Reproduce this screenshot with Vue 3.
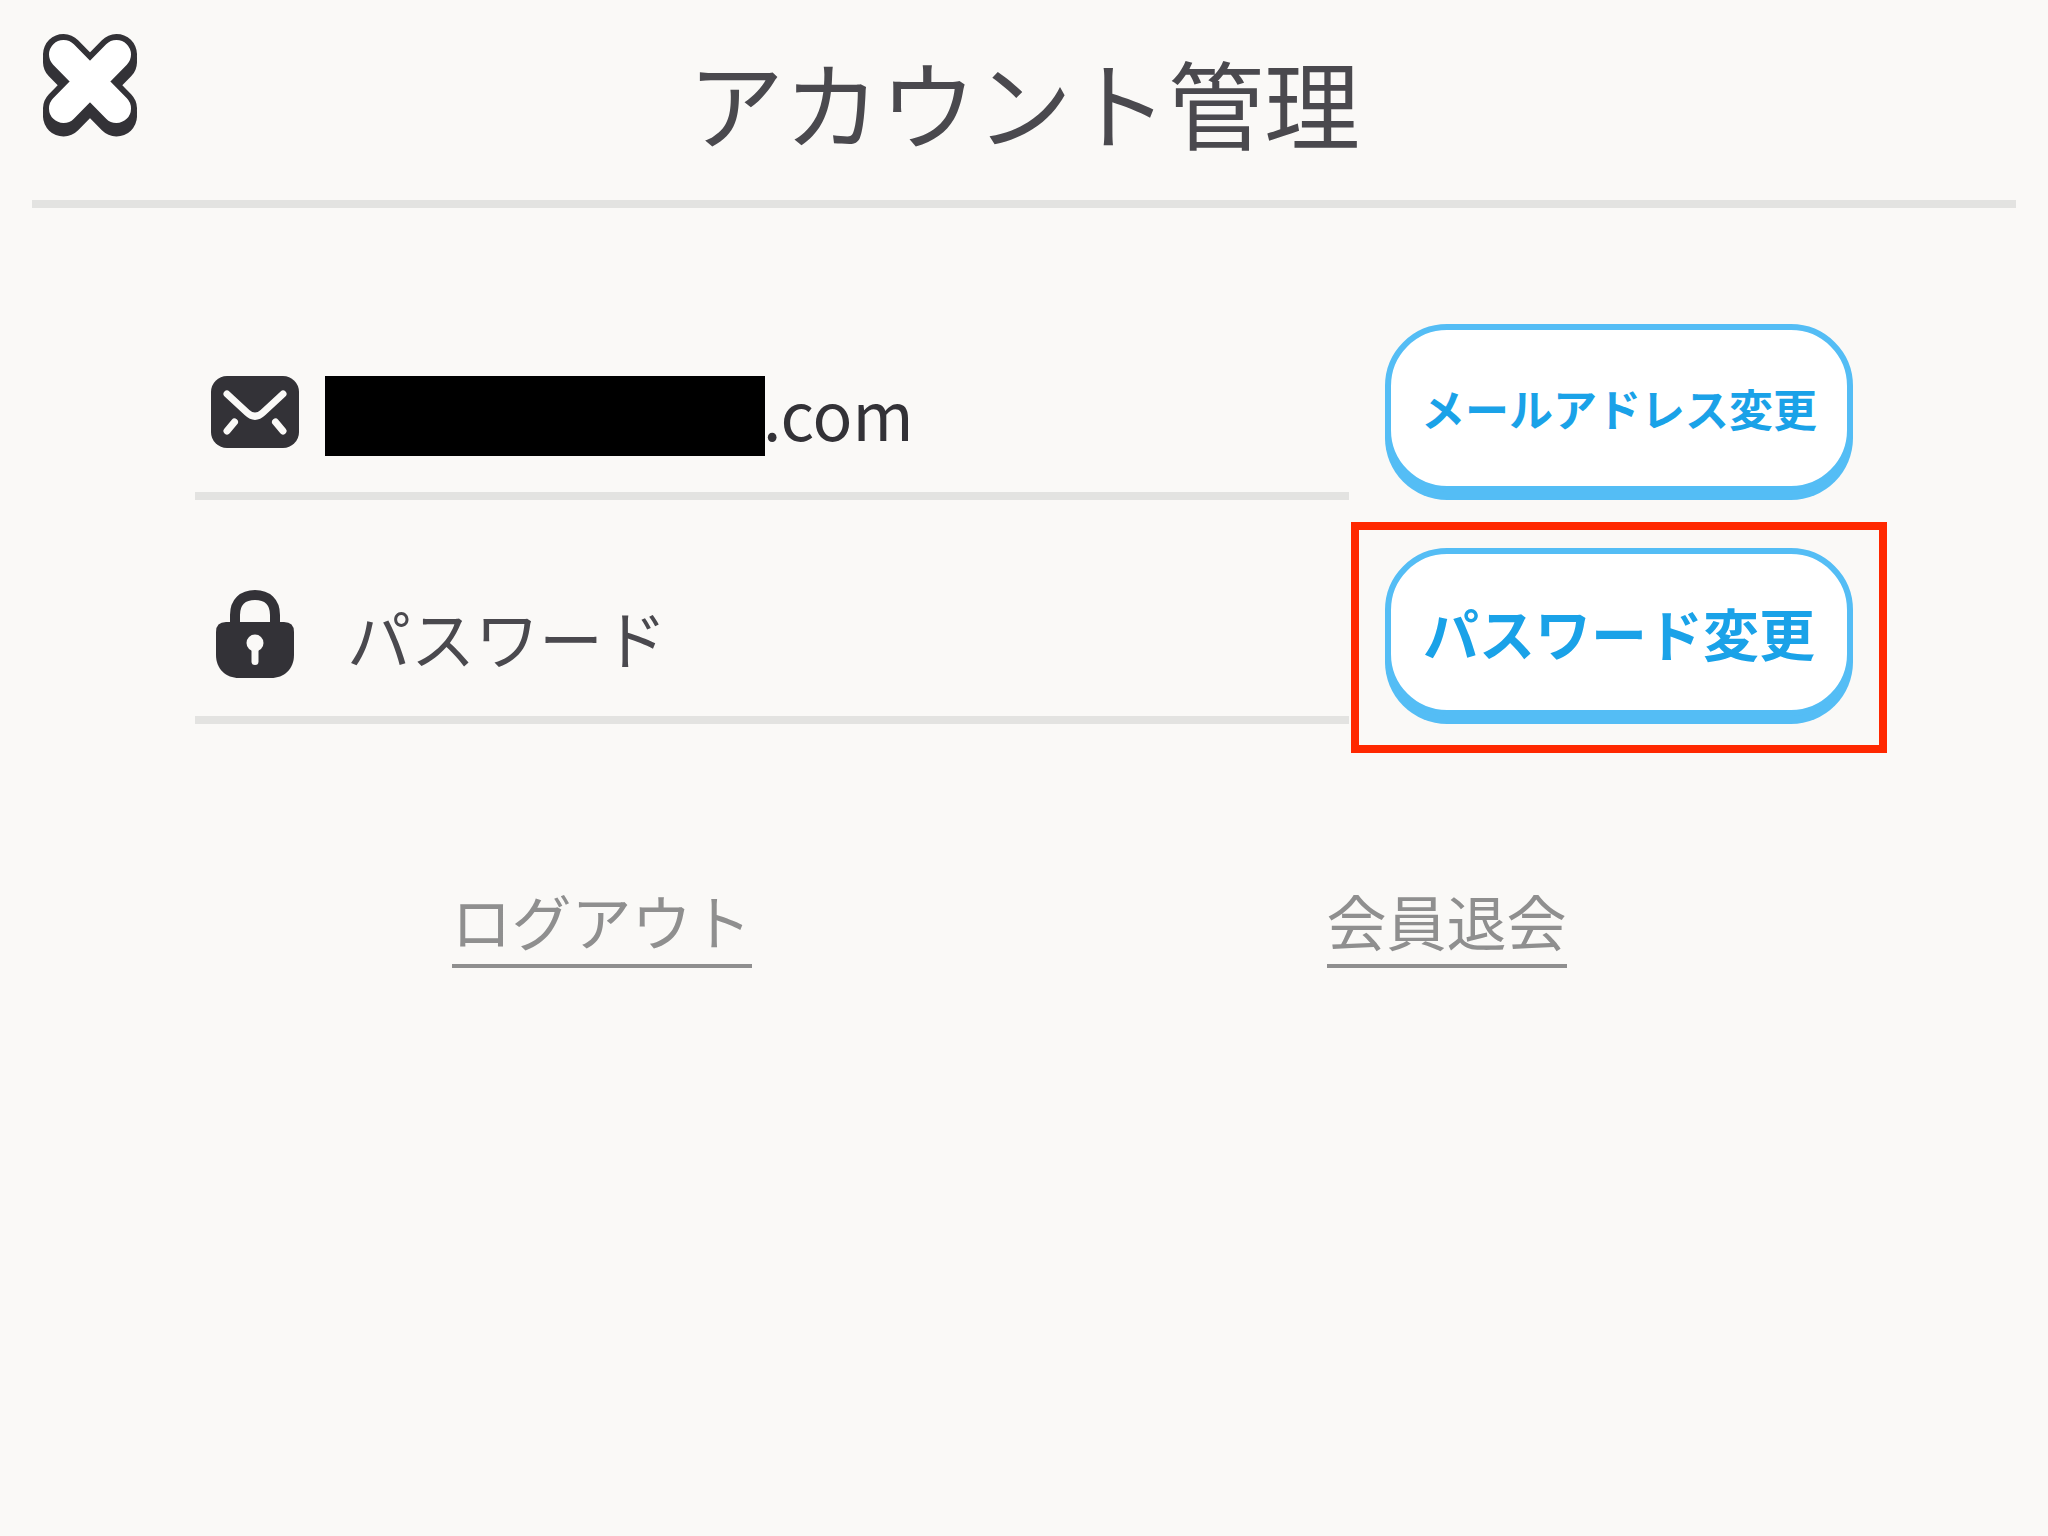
<template>
  <div class="page">
    <header class="header">
      <button class="close" type="button" aria-label="閉じる">
        <svg viewBox="0 0 94 104" width="94" height="104" fill="none" stroke-linecap="round">
          <g stroke="#333237" stroke-width="41">
            <path d="M20.5 20.5 73.5 74.5M73.5 20.5 20.5 74.5" />
            <path d="M20.5 24.5 73.5 78.5M73.5 24.5 20.5 78.5" />
            <path d="M20.5 28 73.5 82M73.5 28 20.5 82" />
          </g>
          <path d="M20.5 20.5 73.5 74.5M73.5 20.5 20.5 74.5" stroke="#fff" stroke-width="29" />
        </svg>
      </button>
      <h1 class="title">アカウント管理</h1>
    </header>

    <main class="content">
      <div class="row">
        <div class="field">
          <svg class="icon" viewBox="0 0 88 72" width="88" height="72">
            <rect width="88" height="72" rx="16" fill="#333237" />
            <g fill="none" stroke="#faf9f7" stroke-width="7" stroke-linecap="round">
              <path d="M16 18 36 36.500Q44 44 52 36.500L72 18" />
              <path d="M23.500 46 16 55M64.500 46 72 55" />
            </g>
          </svg>
          <span class="email"><span class="mask"></span>.com</span>
        </div>
        <button class="btn" type="button">メールアドレス変更</button>
      </div>

      <div class="row">
        <div class="field">
          <svg class="icon" viewBox="0 0 88 92" width="88" height="92">
            <path d="M24 38V25C24 12 32 5 44 5S64 12 64 25V38" fill="none" stroke="#333237" stroke-width="10" />
            <path d="M15 32H73Q83 32 83 42V65C83 79 73 88 60 88H28C15 88 5 79 5 65V42Q5 32 15 32Z" fill="#333237" />
            <circle cx="44" cy="53" r="8.500" fill="#faf9f7" />
            <path d="M44 54V71.500" stroke="#faf9f7" stroke-width="7" stroke-linecap="round" />
          </svg>
          <span class="label">パスワード</span>
        </div>
        <button class="btn btn-large marked" type="button">パスワード変更</button>
      </div>

      <nav class="links">
        <a class="link" href="#logout">ログアウト</a>
        <a class="link" href="#withdraw">会員退会</a>
      </nav>
    </main>
  </div>
</template>

<script setup>
</script>

<style>
body { background: #faf9f7; }
</style>

<style scoped>
.page {
  min-height: 100vh; box-sizing: border-box; padding: 0 32px;
  background: #faf9f7; color: #4a494e;
  font-family: "Noto Sans CJK JP", sans-serif;
}

.header {
  position: relative; padding: 41px 0 39px;
  display: flex; align-items: center; justify-content: center;
  border-bottom: 8px solid #e3e3e1;
}
.title { margin: 0; font-size: 96px; font-weight: 400; line-height: 120px; }
.close { position: absolute; top: 34px; left: 11px; padding: 0; border: none; background: none; cursor: pointer; }
.close svg { display: block; }

.content { padding: 116px 163px 0; display: flex; flex-direction: column; gap: 48px; }
.row { display: flex; align-items: flex-start; gap: 36px; }
.field {
  flex: 1; min-width: 0; box-sizing: border-box; height: 176px;
  padding: 8px 16px 0; border-bottom: 8px solid #e3e3e1;
  display: flex; align-items: center; gap: 26px;
}
.icon { flex: none; }
.email { display: flex; align-items: flex-end; font-size: 66px; line-height: 88px; color: #333237; }
.mask { width: 440px; height: 80px; margin-right: -2px; background: #000; }
.label { padding-left: 22px; font-size: 64px; line-height: 80px; }

.btn {
  position: relative; flex: none; box-sizing: border-box; width: 468px; height: 168px; padding: 0;
  border: 6px solid #54bdf5; border-radius: 62px; box-shadow: 0 8px 0 #54bdf5;
  background: #fff; color: #1aa2e8;
  font-family: inherit; font-size: 44px; font-weight: 700; line-height: 64px;
  white-space: nowrap; cursor: pointer;
}
.btn-large { font-size: 56px; }
.marked::after {
  content: ''; position: absolute; inset: -32px -40px -43px -40px;
  border: 8px solid #ff2800; pointer-events: none;
}

.links { display: grid; grid-template-columns: 1fr 1fr; justify-items: center; margin: 104px -16px 0; }
.link { font-size: 60px; line-height: 88px; color: #8f8f8f; text-decoration: none; border-bottom: 4px solid #8f8f8f; }
</style>
